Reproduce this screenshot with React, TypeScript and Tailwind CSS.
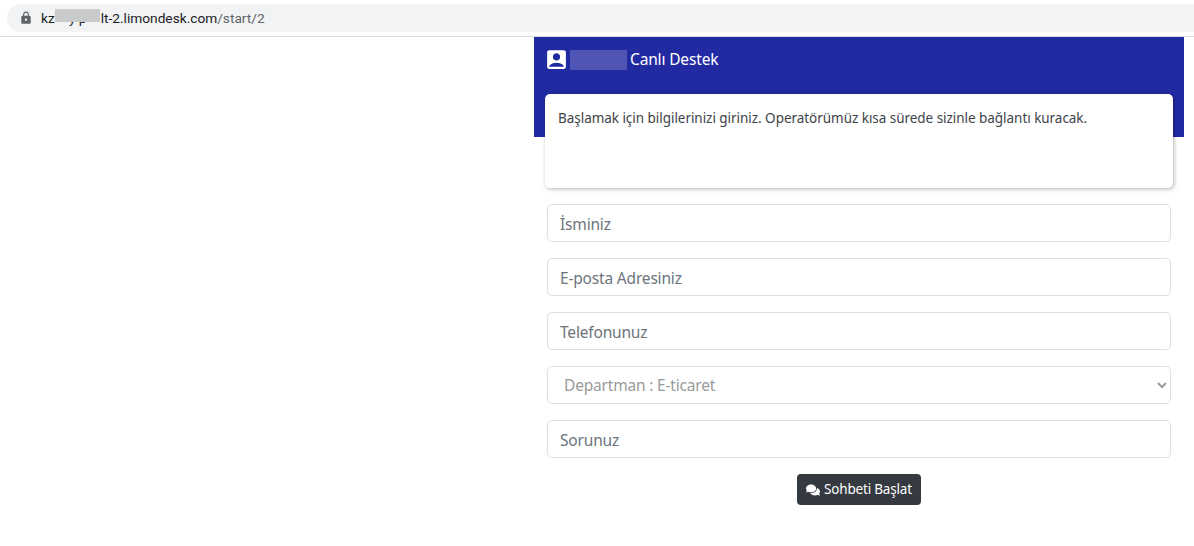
import { FaComments } from "react-icons/fa";
import { MdAccountBox, MdLock } from "react-icons/md";

const fields = ["İsminiz", "E-posta Adresiniz", "Telefonunuz"];
const inputClass =
  "w-full h-[38px] px-3 pt-px bg-white border border-[#dcdfe3] rounded-[5px] text-[15.5px] tracking-[-0.18px] text-[#495057] placeholder:text-[#6c757d] outline-none";

export default function App() {
  return (
    <div className="min-h-[546px] bg-white font-['Noto_Sans',sans-serif]">
      <div className="h-[37px] border-b border-[#dadce0] pt-1 pl-[7px]">
        <div className="h-7 flex items-center rounded-l-full bg-[#f1f3f4] pl-[12px] font-['Roboto',sans-serif] text-[13.7px] text-[#202124]">
          <MdLock className="w-[14px] h-[14px] text-[#5f6368]" />
          <span className="ml-[8px]">kz</span>
          <span className="relative w-[46px] text-center">
            y p
            <span className="absolute left-0 top-[1px] w-[45px] h-[13px] bg-[#c9cacb]" />
          </span>
          <span>lt-2.limondesk.com</span>
          <span className="text-[#5f6368]">/start/2</span>
        </div>
      </div>

      <div className="flex">
        <div className="w-[534px] shrink-0" />
        <div className="w-[650px] shrink-0">
          <div className="h-[100px] bg-[#222aa2] pt-[10px] pl-[10px] text-white">
            <div className="flex items-center h-[25px]">
              <MdAccountBox className="w-[25px] h-[25px]" />
              <span className="ml-px w-[57px] h-[20px] bg-[#5055b5]" />
              <span className="ml-[3px] text-[15.5px] tracking-[-0.15px]">Canlı Destek</span>
            </div>
          </div>

          <div className="relative -mt-[43px] ml-[11px] w-[628px] h-[94px] bg-white rounded-[5px] shadow-[1px_1px_4px_rgba(0,0,0,0.3)] px-[13px] pt-[14px] text-[13.5px] tracking-[-0.04px] leading-[21px] text-[#3d4349]">
            Başlamak için bilgilerinizi giriniz. Operatörümüz kısa sürede sizinle bağlantı kuracak.
          </div>

          <div className="ml-[13px] w-[624px] mt-[16px] flex flex-col gap-4">
            {fields.map((f) => (
              <input key={f} placeholder={f} className={inputClass} />
            ))}
            <select className="w-full h-[38px] px-3 bg-white border border-[#dcdfe3] rounded-[5px] text-[15.5px] tracking-[-0.18px] text-[#9a9a9a] outline-none">
              <option>Departman : E-ticaret</option>
            </select>
            <input placeholder="Sorunuz" className={inputClass} />
          </div>

          <div className="ml-[13px] w-[624px] mt-4 flex justify-center">
            <button className="h-[31px] w-[124px] flex items-center justify-center gap-1 rounded-[4px] bg-[#343a40] text-white text-[13.5px] tracking-[-0.19px]">
              <FaComments className="w-[14px] h-[14px]" />
              Sohbeti Başlat
            </button>
          </div>
        </div>
      </div>
    </div>
  );
}
